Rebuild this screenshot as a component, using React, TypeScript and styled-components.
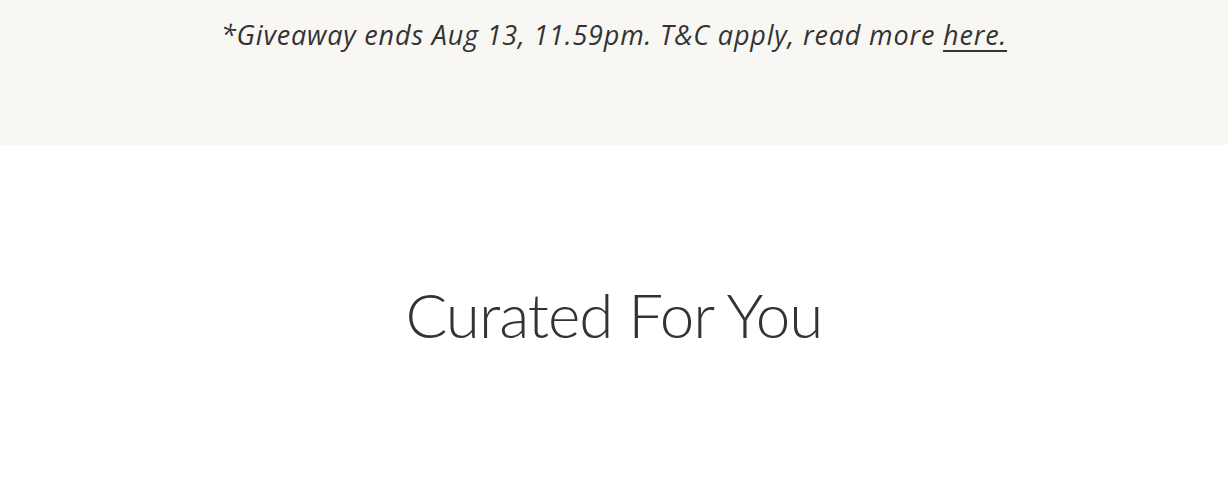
import { createGlobalStyle } from 'styled-components'
import styled from 'styled-components'

const GlobalStyle = createGlobalStyle`
  body {
    margin: 0;
    background: #ffffff;
    color: #333333;
  }
`

const Banner = styled.section`
  background: #f8f7f3;
  height: 145px;
  display: flex;
  justify-content: center;
  padding-top: 16px;
  box-sizing: border-box;
`
const Note = styled.p`
  margin: 0;
  font-family: "Open Sans", "Liberation Sans", sans-serif;
  font-style: italic;
  font-size: 27px;
  line-height: 38px;
  color: #333333;
  letter-spacing: 0.82px;
`
const NoteLink = styled.a`
  color: inherit;
  text-decoration: underline;
  text-underline-offset: 5px;
  text-decoration-thickness: 2px;
`
const Curated = styled.section`
  display: flex;
  justify-content: center;
  padding-top: 131px;
`
const Heading = styled.h2`
  margin: 0;
  font-family: Lato, "Open Sans", sans-serif;
  font-weight: 300;
  font-size: 62px;
  line-height: 76px;
  letter-spacing: -1px;
  color: #333333;
`

const App = () => {
  return (
    <>
      <GlobalStyle />
      <Banner>
        <Note>
          *Giveaway ends Aug 13, 11.59pm. T&amp;C apply, read more <NoteLink href="#">here.</NoteLink>
        </Note>
      </Banner>
      <Curated>
        <Heading>Curated For You</Heading>
      </Curated>
    </>
  )
}

export default App
